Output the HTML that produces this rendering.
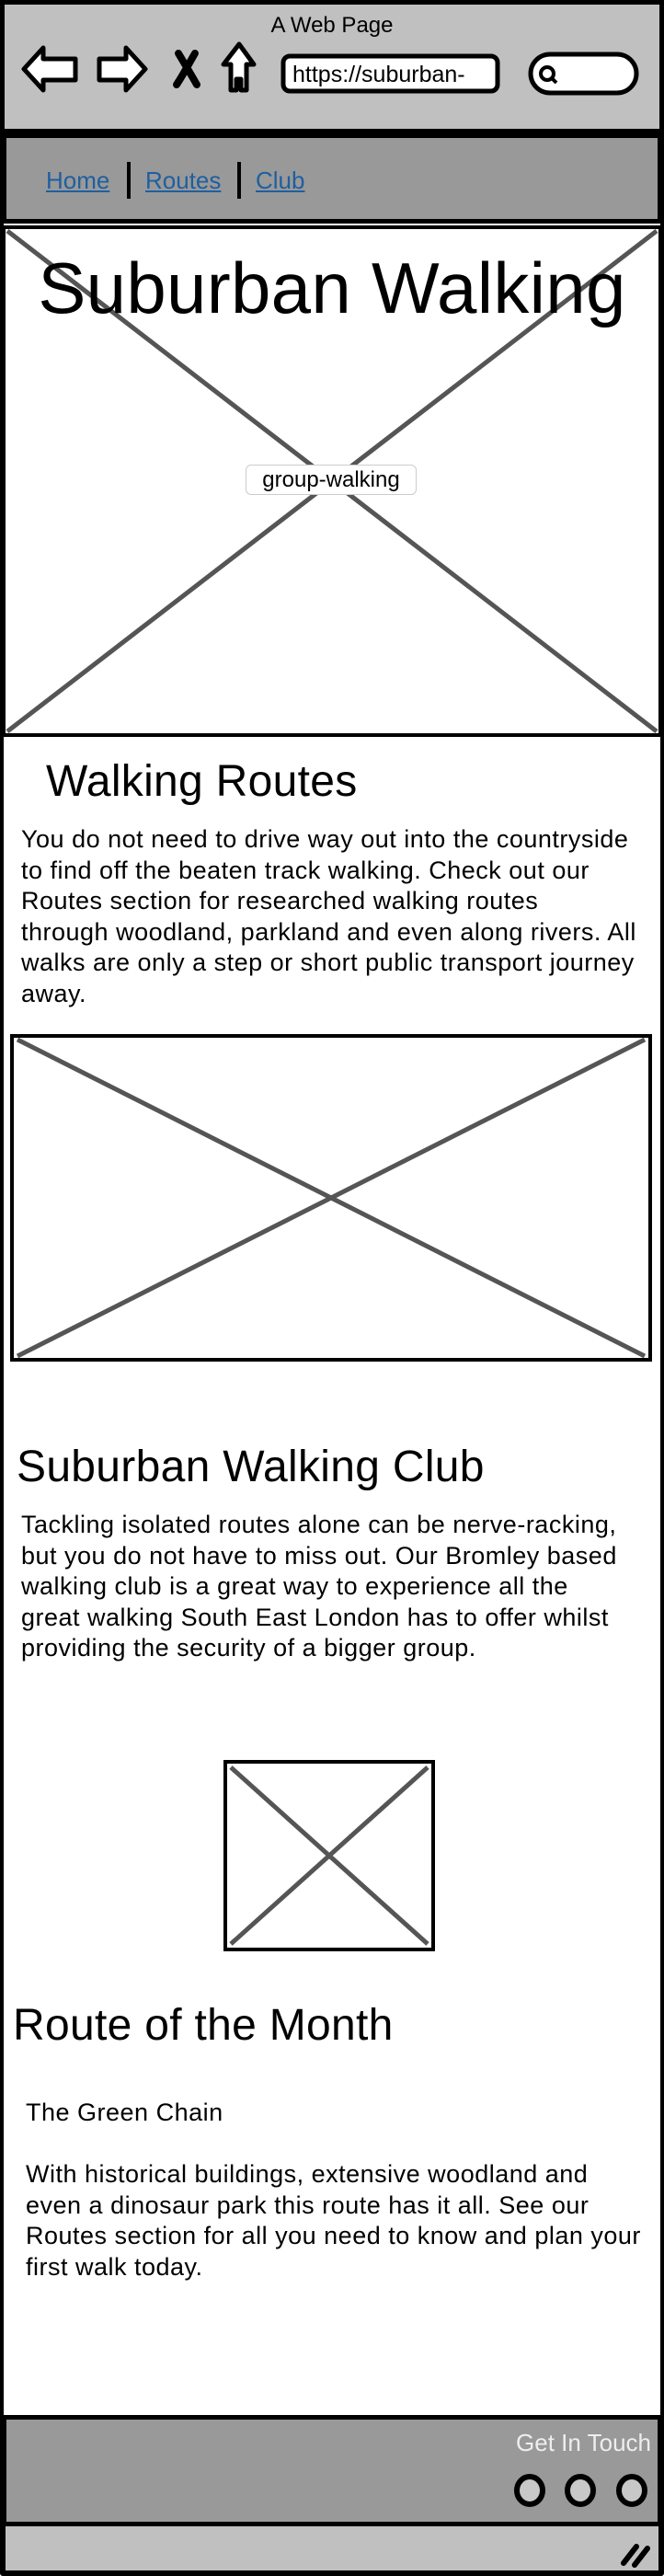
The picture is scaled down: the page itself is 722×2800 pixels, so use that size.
<!DOCTYPE html>
<html><head><meta charset="utf-8"><style>
*{margin:0;padding:0;box-sizing:border-box}
body{width:722px;height:2800px;position:relative;background:#fff;font-family:"Liberation Sans",sans-serif;color:#000;overflow:hidden}
.a{position:absolute;white-space:nowrap}
.p{font-size:27px;line-height:33.5px;letter-spacing:0.5px}
.h{font-size:48px;line-height:56px;letter-spacing:0.3px}
</style></head><body>
<div class="a" style="left:0;top:0;width:722px;height:2800px;border:4px solid #000;border-radius:3px"></div>
<div class="a" style="left:0;top:0;width:722px;height:145px;background:#c0c0c0;border:5px solid #000"></div>
<div class="a" style="left:0;top:13px;width:722px;text-align:center;font-size:24px;line-height:30px">A Web Page</div>
<svg class="a" style="left:0;top:40px" width="722" height="70" viewBox="0 0 722 70">
<g stroke="#000" stroke-width="5" fill="#fff" stroke-linejoin="round">
<path d="M26 35 L47 12 L47 24 L82 24 L82 47 L47 47 L47 58 Z"/>
<path d="M158 35 L137 12 L137 24 L108 24 L108 47 L137 47 L137 58 Z"/>
<path d="M260 8 L276 30 L268 30 L268 58 L262 58 L262 46 L257 46 L257 58 L251 58 L251 30 L243 30 Z"/>
<rect x="308" y="21" width="233" height="38" rx="7"/>
<rect x="577" y="19" width="115" height="42" rx="21"/>
<circle cx="595" cy="40" r="7" stroke-width="4"/>
<path d="M600 45 L605 50" stroke-width="4"/>
</g>
<path d="M194 18 C200 28 206 38 214 52 M212 18 C206 28 200 40 192 52" stroke="#000" stroke-width="8" fill="none" stroke-linecap="round"/>
</svg>
<div class="a" style="left:318px;top:62px;font-size:25px;line-height:38px">https://suburban-</div>
<div class="a" style="left:2px;top:145px;width:718px;height:98px;background:#999;border:5px solid #000"></div>
<div class="a" style="left:50px;top:181px;font-size:26px;line-height:30px;color:#1f5fa0;text-decoration:underline">Home</div>
<div class="a" style="left:138px;top:176px;width:4px;height:40px;background:#000"></div>
<div class="a" style="left:158px;top:181px;font-size:26px;line-height:30px;color:#1f5fa0;text-decoration:underline">Routes</div>
<div class="a" style="left:258px;top:176px;width:4px;height:40px;background:#000"></div>
<div class="a" style="left:278px;top:181px;font-size:26px;line-height:30px;color:#1f5fa0;text-decoration:underline">Club</div>
<svg class="a" style="left:2px;top:245px" width="718" height="556">
<rect x="2" y="2" width="714" height="552" fill="#fff" stroke="#000" stroke-width="4"/>
<path d="M6 6 L712 550 M712 6 L6 550" stroke="#555" stroke-width="5"/>
</svg>
<div class="a" style="left:0;top:268px;width:722px;text-align:center;font-size:78px;line-height:90px;letter-spacing:0.3px">Suburban Walking</div>
<div class="a" style="left:267px;top:505px;width:186px;height:33px;background:#fff;border:1px solid #ccc;border-radius:6px;text-align:center;font-size:24px;line-height:31px">group-walking</div>
<div class="a h" style="left:50px;top:822px">Walking Routes</div>
<div class="a p" style="left:23px;top:896px">You do not need to drive way out into the countryside<br>to find off the beaten track walking. Check out our<br>Routes section for researched walking routes<br>through woodland, parkland and even along rivers. All<br>walks are only a step or short public transport journey<br>away.</div>
<svg class="a" style="left:11px;top:1124px" width="698" height="356">
<rect x="2" y="2" width="694" height="352" fill="#fff" stroke="#000" stroke-width="4"/>
<path d="M8 350 L690 6 M8 6 L690 350" stroke="#555" stroke-width="5"/>
</svg>
<div class="a h" style="left:18px;top:1567px">Suburban Walking Club</div>
<div class="a p" style="left:23px;top:1641px">Tackling isolated routes alone can be nerve-racking,<br>but you do not have to miss out. Our Bromley based<br>walking club is a great way to experience all the<br>great walking South East London has to offer whilst<br>providing the security of a bigger group.</div>
<svg class="a" style="left:243px;top:1913px" width="230" height="208">
<rect x="2" y="2" width="226" height="204" fill="#fff" stroke="#000" stroke-width="4"/>
<path d="M8 200 L222 8 M8 8 L222 200" stroke="#555" stroke-width="5"/>
</svg>
<div class="a h" style="left:14px;top:2174px">Route of the Month</div>
<div class="a p" style="left:28px;top:2280px">The Green Chain</div>
<div class="a p" style="left:28px;top:2347px">With historical buildings, extensive woodland and<br>even a dinosaur park this route has it all. See our<br>Routes section for all you need to know and plan your<br>first walk today.</div>
<div class="a" style="left:2px;top:2625px;width:718px;height:121px;background:#999;border:5px solid #000"></div>
<div class="a" style="right:14px;top:2640px;font-size:26px;line-height:30px;color:#eee">Get In Touch</div>
<svg class="a" style="left:550px;top:2686px" width="170" height="42">
<g fill="#c8c8c8" stroke="#000" stroke-width="6">
<ellipse cx="26" cy="21" rx="14" ry="15"/><ellipse cx="81" cy="21" rx="14" ry="15"/><ellipse cx="137" cy="21" rx="14" ry="15"/>
</g></svg>
<div class="a" style="left:2px;top:2746px;width:718px;height:52px;background:#c0c0c0;border:4px solid #000;border-top:none"></div>
<svg class="a" style="left:672px;top:2760px" width="40" height="32">
<path d="M6 26 L20 8 M18 28 L32 10" stroke="#000" stroke-width="6" stroke-linecap="round"/>
</svg>
</body></html>
